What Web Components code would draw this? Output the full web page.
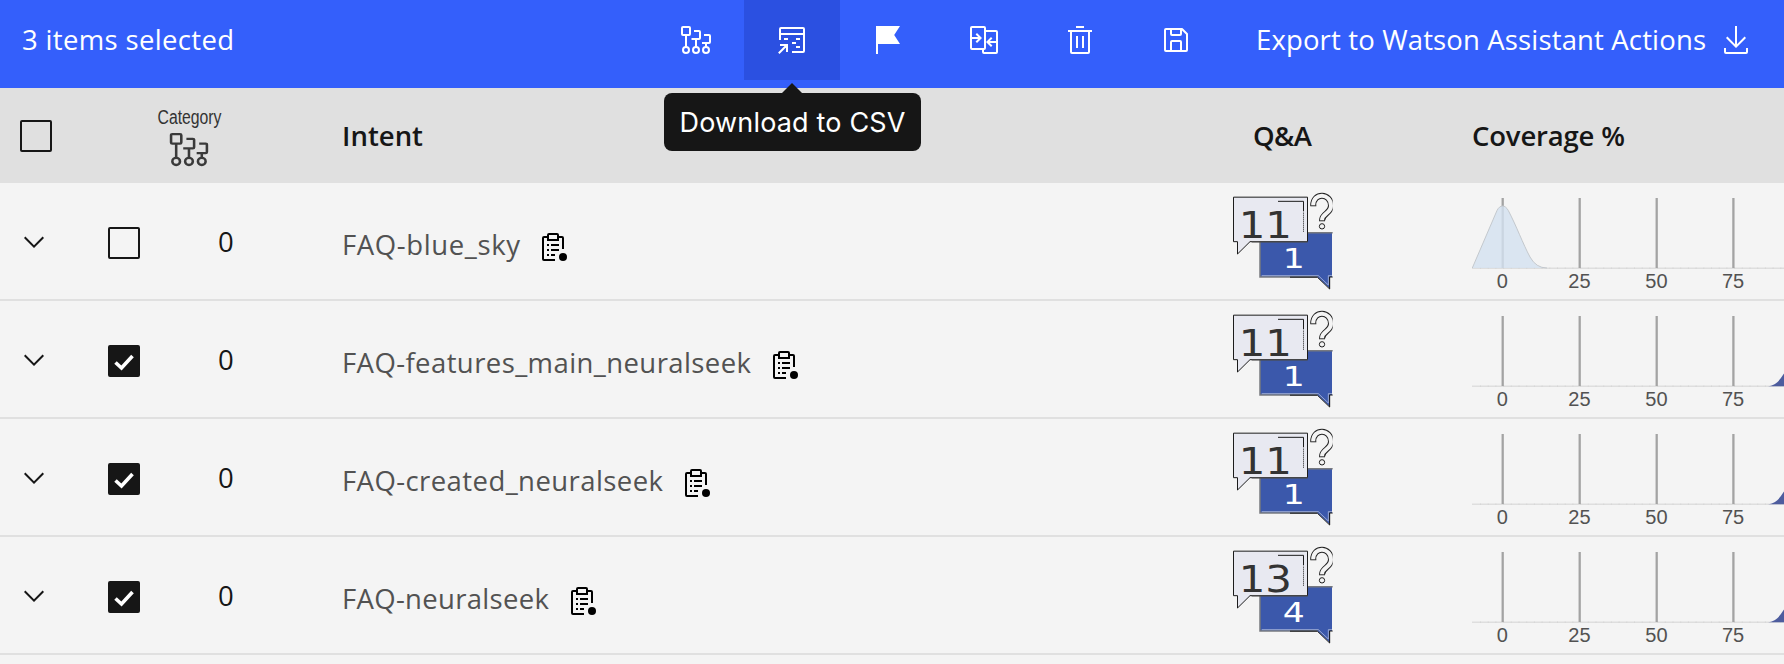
<!DOCTYPE html>
<html lang="en">
<head>
<meta charset="utf-8">
<title>Intents</title>
<style>
html,body{margin:0;height:100%;overflow:hidden}
body{background:#f4f4f4;color:#161616;font-family:"Open Sans","Noto Sans",sans-serif;font-size:27.5px}
</style>
</head>
<body>
<intent-table></intent-table>
<script>
const define = (name, html, setup) => customElements.define(name, class extends HTMLElement {
  connectedCallback() {
    if (this.shadowRoot) return;
    const t = document.createElement('template');
    t.innerHTML = typeof html === 'function' ? html(this) : html;
    this.attachShadow({mode: 'open'}).append(t.content.cloneNode(true));
    if (setup) setup(this);
  }
});

/* Text tracked so that it fills a given width */
define('tracked-text', el => `<style>:host{display:block;flex:none;white-space:nowrap;width:${el.getAttribute('width')}px;line-height:40px}span{display:inline-block}</style><span>${el.getAttribute('text')}</span>`, el => {
  const s = el.shadowRoot.querySelector('span');
  const n = el.getAttribute('text').length;
  s.style.letterSpacing = ((+el.getAttribute('width') - s.getBoundingClientRect().width) / (n - 1)) + 'px';
});

const tree = '<g fill="none" stroke="currentColor" stroke-width="2"><rect x="2" y="3" width="8" height="8" rx="1"/><circle cx="6" cy="26" r="3"/><circle cx="16" cy="26" r="3"/><circle cx="26" cy="26" r="3"/><path d="M6 11V23M14 7h5a1 1 0 0 1 1 1v6a1 1 0 0 1-1 1h-7.500M16 15v8M24 11h5a1 1 0 0 1 1 1v6a1 1 0 0 1-1 1h-7M26 19v4"/></g>';
const icons = {
  tree,
  csv: '<path fill="none" stroke="currentColor" stroke-width="2" d="M4 16V5a1 1 0 0 1 1-1H27a1 1 0 0 1 1 1V27a1 1 0 0 1-1 1H16M4 10H28M8 15h4M20 15h4M16 19h4M20 23h4M2.800 29.200L11 21M4 21H11V28"/>',
  flag: '<path d="M6 30H4V2H28l-5.800 9L28 20H6Z"/>',
  merge: '<path d="M28 6H18V4a2 2 0 0 0-2-2H4A2 2 0 0 0 2 4V24a2 2 0 0 0 2 2H14v2a2 2 0 0 0 2 2H28a2 2 0 0 0 2-2V8A2 2 0 0 0 28 6ZM4 15h6.170L7.590 17.590 9 19l5-5L9 9 7.590 10.410 10.170 13H4V4H16V24H4ZM16 28V26a2 2 0 0 0 2-2V8H28v9H21.830l2.580-2.590L23 13l-5 5 5 5 1.410-1.410L21.830 19H28v9Z"/>',
  trash: '<path d="M12 12H14V24H12zM18 12H20V24H18zM4 6V8H6V28a2 2 0 0 0 2 2H24a2 2 0 0 0 2-2V8h2V6zM8 28V8H24V28zM12 2H20V4H12z"/>',
  save: '<path d="M27.710 9.290l-5-5A1 1 0 0 0 22 4H6A2 2 0 0 0 4 6V26a2 2 0 0 0 2 2H26a2 2 0 0 0 2-2V10A1 1 0 0 0 27.710 9.290ZM12 6h8v4H12Zm8 20H12V18h8Zm2 0V18a2 2 0 0 0-2-2H12a2 2 0 0 0-2 2v8H6V6h4v4a2 2 0 0 0 2 2h8a2 2 0 0 0 2-2V6.410l4 4V26Z"/>',
  download: '<path d="M26 24v4H6V24H4v4a2 2 0 0 0 2 2H26a2 2 0 0 0 2-2V24zM26 14L24.590 12.590 17 20.170V2H15V20.170L7.410 12.590 6 14 16 24z"/>',
  chevron: '<path d="M16 22L6 12 7.400 10.600 16 19.200 24.600 10.600 26 12z"/>',
  report: '<path fill="none" stroke="currentColor" stroke-width="2" d="M26 18V7a1 1 0 0 0-1-1H22M10 6H7a1 1 0 0 0-1 1V28a1 1 0 0 0 1 1H18M12 3h8a1 1 0 0 1 1 1v5H11V4a1 1 0 0 1 1-1zM10 14h2M14 14h8M10 19h2M14 19h8M10 24h2M14 24h4"/><circle cx="26" cy="26" r="4"/>'
};
define('ui-icon', el => `<style>:host{display:block;flex:none;width:32px;height:32px}svg{display:block}</style><svg width="32" height="32" viewBox="0 0 32 32" fill="currentColor">${icons[el.getAttribute('name')]}</svg>`);

define('check-box', `<style>
:host{display:block;flex:none;box-sizing:border-box;width:32px;height:32px;border:2px solid #161616;border-radius:2px}
svg{display:none}
:host([checked]){background:#161616}
:host([checked]) svg{display:block}
</style><svg width="28" height="28" viewBox="0 0 28 28"><path d="M5.500 15.500l6 5.500L22.500 9" fill="none" stroke="#fff" stroke-width="3.600"/></svg>`);

define('tool-button', `<style>
:host{position:relative;display:flex;justify-content:center;align-items:center;width:96px;height:80px;flex:none}
:host([active]){background:#2b50e1}
</style><slot></slot>`);

define('tool-tip', `<style>
:host{position:absolute;z-index:2;left:-80px;top:93px;width:257px;height:58px;box-sizing:border-box;padding:10px 0 0 15.500px;border-radius:8px;background:#161616;color:#fff;font:400 27px Inter,sans-serif}
:host::before{content:"";position:absolute;left:118px;top:-10px;border:10px solid transparent;border-top:0;border-bottom-color:#161616}
</style><slot></slot>`);

define('action-bar', `<style>
:host{display:flex;box-sizing:border-box;height:88px;background:#345ffb;color:#fff}
.count{width:648px;box-sizing:border-box;padding:20px 0 0 22px}
.export{display:flex;margin-left:32px;gap:14px;padding-top:20px}
.export ui-icon{margin-top:4px}
</style>
<div class="count"><tracked-text width="212" text="3 items selected"></tracked-text></div>
<tool-button><ui-icon name="tree"></ui-icon></tool-button>
<tool-button active><ui-icon name="csv"></ui-icon><tool-tip><tracked-text width="226" text="Download to CSV"></tracked-text></tool-tip></tool-button>
<tool-button><ui-icon name="flag"></ui-icon></tool-button>
<tool-button><ui-icon name="merge"></ui-icon></tool-button>
<tool-button><ui-icon name="trash"></ui-icon></tool-button>
<tool-button><ui-icon name="save"></ui-icon></tool-button>
<div class="export"><tracked-text width="450" text="Export to Watson Assistant Actions"></tracked-text><ui-icon name="download"></ui-icon></div>`);

define('category-mark', `<style>:host{display:block;font-weight:400;line-height:normal}svg{display:block;color:#3a3a3a;overflow:visible}</style>
<svg width="68" height="68" viewBox="0 0 68 68"><text x="0.500" y="20.200" font-family="Liberation Sans,sans-serif" font-size="20" font-weight="400" fill="#333" textLength="64" lengthAdjust="spacingAndGlyphs">Category</text><g transform="translate(11.500 26.600) scale(1.280 1.185)">${tree}</g></svg>`);

define('table-head', `<style>
:host{display:grid;grid-template-columns:137px 185px 911px 219px 1fr;height:95px;box-sizing:border-box;padding-left:20px;background:#e0e0e0;font-weight:600}
check-box{margin-top:32px}category-mark{margin-top:16px}tracked-text{margin-top:28px}
</style>
<check-box></check-box><category-mark></category-mark>
<tracked-text width="81" text="Intent"></tracked-text>
<tracked-text width="59" text="Q&amp;A"></tracked-text>
<tracked-text width="153" text="Coverage %"></tracked-text>`);

define('qa-badge', el => `<style>:host{display:block}svg{display:block}text{font-family:"DejaVu Sans",sans-serif}</style>
<svg width="101" height="98" viewBox="54 36 303 294">
<path d="M135 159H351V291H345V326L307 291H135Z" fill="#3b58ab"/>
<path d="M353 158H135V291H307" fill="none" stroke="#77797f" stroke-width="4.500"/>
<path d="M140 287H310L340 315V287H351" fill="none" stroke="#c8d0e6" stroke-width="2"/>
<path d="M225 291.500H307L344 327V291H353" fill="none" stroke="#161616" stroke-width="3"/>
<path d="M55.500 51.500H277.500V185H105L67.500 222V185H55.500Z" fill="#e8e9f1" stroke="#1c1c1c" stroke-width="3"/>
<path d="M110 186H278" stroke="#555" stroke-width="3"/>
<path d="M189 64H265.500V94" fill="none" stroke="#1c1c1c" stroke-width="3"/>
<path d="M265.500 98V158" stroke="#1c1c1c" stroke-width="3" stroke-dasharray="3 3"/>
<text x="71" y="174" font-size="112" fill="#333" textLength="160" lengthAdjust="spacingAndGlyphs">${el.getAttribute('questions')}</text>
<text x="203" y="264" font-size="81" fill="#fff" textLength="66" lengthAdjust="spacingAndGlyphs">${el.getAttribute('answers')}</text>
<g fill="none" transform="translate(0 2.500)"><path d="M286 75H304M312 120H330" stroke="#222" stroke-width="2.500"/>
<path d="M294.500 75C294.500 34 348 36 348 75C348 99 321 96 321 120" stroke="#222" stroke-width="18"/>
<path d="M294.500 73.500C294.500 34 348 36 348 75C348 99 321 96 321 118" stroke="#f4f4f4" stroke-width="12"/>
<circle cx="321" cy="136.500" r="8" stroke="#222" stroke-width="3"/></g>
<path d="M355 36V156" stroke="#f4f4f4" stroke-width="4"/>
</svg>`);

define('coverage-chart', el => {
  const xs = [30.7, 107.7, 184.7, 261.4];
  const low = el.hasAttribute('low');
  return `<style>:host{display:block;overflow:hidden}svg{display:block}text{font:20px "Liberation Sans",sans-serif;fill:#525252;text-anchor:middle}</style>
<svg width="312" height="96" viewBox="0 0 312 96">
<path d="M0 70.300H312" stroke="#dedede" stroke-width="1.500"/>
<path d="M8 70.300H312" stroke="#d6d6d6" stroke-width="1.500" stroke-dasharray="1 6.700"/>
${xs.map((x, i) => `<path d="M${x} 0V70" stroke="#a3a3a3" stroke-width="2.300"/><text x="${x - .3}" y="90">${i * 25}</text>`).join('')}
${low
  ? '<path d="M.300 70L25 12.500C28 6.500 33 6.500 36.300 12.500C44 27 51 46 58 59Q64 70 73 70Z" fill="#d3e1f0" fill-opacity=".8"/><path d="M.300 70L25 12.500C28 6.500 33 6.500 36.300 12.500C44 27 51 46 58 59Q64 70 75 70" fill="none" stroke="#c3c8cd"/>'
  : '<path d="M296 70.300C304 69 307 65 312 57.500V70.300Z" fill="#4d5c9e"/>'}
</svg>`;
});

define('intent-row', el => `<style>
:host{display:grid;grid-template-columns:90px 110px 124px 891px 239px 1fr;box-sizing:border-box;height:118px;border-bottom:2px solid #e0e0e0;padding-left:18px}
.chev{margin-top:43px}check-box{margin-top:44px}
.num{margin-top:39px;line-height:40px}
.intent{display:flex;gap:17px;color:#525252;padding-top:42px}
.intent ui-icon{color:#000;margin-top:6px}
qa-badge{margin-top:9px}coverage-chart{margin-top:15px}
</style>
<ui-icon class="chev" name="chevron"></ui-icon>
<check-box ${el.hasAttribute('checked') ? 'checked' : ''}></check-box>
<div class="num">0</div>
<div class="intent"><tracked-text width="${el.getAttribute('span')}" text="${el.getAttribute('name')}"></tracked-text><ui-icon name="report"></ui-icon></div>
<qa-badge questions="${el.getAttribute('questions')}" answers="${el.getAttribute('answers')}"></qa-badge>
<coverage-chart ${el.hasAttribute('low') ? 'low' : ''}></coverage-chart>`);

define('intent-table', `<style>:host{display:block;width:1784px;height:664px;overflow:hidden}</style>
<action-bar></action-bar>
<table-head></table-head>
<intent-row name="FAQ-blue_sky" span="178" questions="11" answers="1" low></intent-row>
<intent-row name="FAQ-features_main_neuralseek" span="409" questions="11" answers="1" checked></intent-row>
<intent-row name="FAQ-created_neuralseek" span="321" questions="11" answers="1" checked></intent-row>
<intent-row name="FAQ-neuralseek" span="207" questions="13" answers="4" checked></intent-row>`);
</script>
</body>
</html>
